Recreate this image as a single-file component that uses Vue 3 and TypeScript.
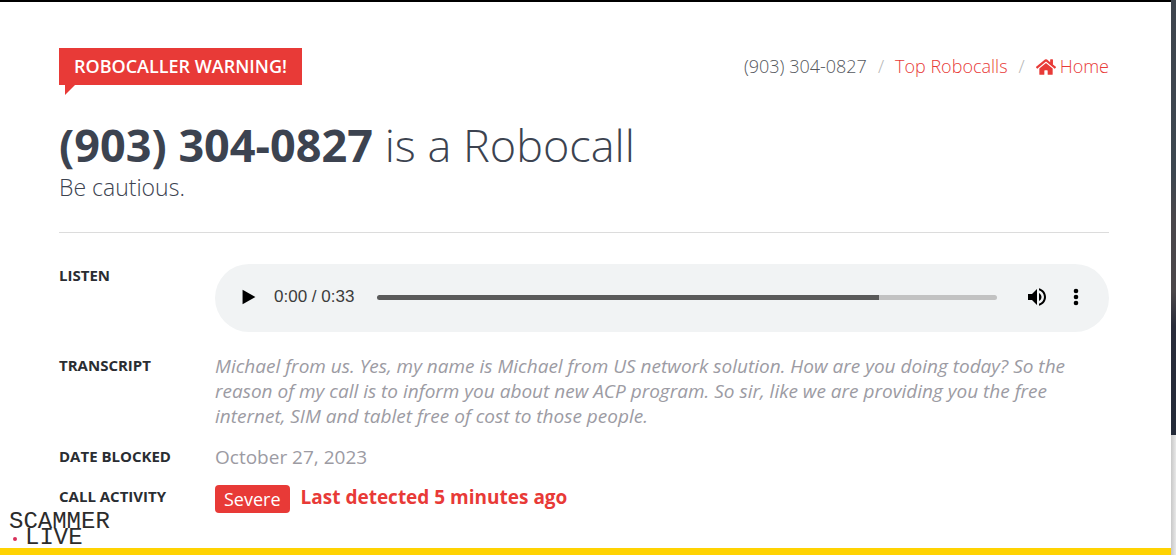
<script setup lang="ts">
import { computed, ref } from 'vue'

interface Recording {
  duration: number
  buffered: number
}

const phone = '(903) 304-0827'
const transcript =
  'Michael from us. Yes, my name is Michael from US network solution. How are you doing today? So the reason of my call is to inform you about new ACP program. So sir, like we are providing you the free internet, SIM and tablet free of cost to those people.'

const recording: Recording = { duration: 33, buffered: 0.81 }
const position = ref(0)

const clock = (seconds: number): string =>
  `${Math.floor(seconds / 60)}:${String(Math.floor(seconds % 60)).padStart(2, '0')}`

const elapsed = computed(() => `${clock(position.value)} / ${clock(recording.duration)}`)
const bufferedWidth = computed(() => ({ '--buffered': `${recording.buffered * 100}%` }))
</script>

<template>
  <div class="screen">
    <div class="page">
      <main class="content">
        <header class="top">
          <strong class="warning">ROBOCALLER WARNING!</strong>
          <nav class="crumbs" aria-label="Breadcrumb">
            <span class="current">{{ phone }}</span>
            <span class="slash">/</span>
            <a href="#robocalls">Top Robocalls</a>
            <span class="slash">/</span>
            <a href="#home" class="home">
              <svg viewBox="0 0 576 512" aria-hidden="true">
                <path d="M280.37 148.26L96 300.11V464a16 16 0 0 0 16 16l112.06-.29a16 16 0 0 0 15.92-16V368a16 16 0 0 1 16-16h64a16 16 0 0 1 16 16v95.64a16 16 0 0 0 16 16.05L464 480a16 16 0 0 0 16-16V300L295.67 148.26a12.19 12.19 0 0 0-15.3 0zM571.6 251.47L488 182.56V44.05a12 12 0 0 0-12-12h-56a12 12 0 0 0-12 12v72.61L318.47 43a48 48 0 0 0-61 0L4.34 251.47a12 12 0 0 0-1.6 16.9l25.5 31A12 12 0 0 0 45.15 301l235.22-193.74a12.19 12.19 0 0 1 15.3 0L530.9 301a12 12 0 0 0 16.9-1.6l25.5-31a12 12 0 0 0-1.7-16.93z" />
              </svg>
              Home
            </a>
          </nav>
        </header>

        <h1><strong>{{ phone }}</strong> is a Robocall</h1>
        <p class="lead">Be cautious.</p>

        <dl class="details">
          <dt>LISTEN</dt>
          <dd>
            <div class="player">
              <button type="button" class="play" aria-label="Play">
                <svg viewBox="0 0 24 24"><path d="M5 4v16l14-8z" /></svg>
              </button>
              <span class="time">{{ elapsed }}</span>
              <input
                v-model.number="position"
                class="seek"
                type="range"
                min="0"
                :max="recording.duration"
                aria-label="Seek"
                :style="bufferedWidth"
              />
              <button type="button" class="volume" aria-label="Mute">
                <svg viewBox="0 0 24 24">
                  <path d="M3 9v6h4l5 5V4L7 9H3zm13.5 3c0-1.77-1.02-3.29-2.5-4.03v8.05c1.48-.73 2.5-2.25 2.5-4.02zM14 3.23v2.06c2.89.86 5 3.54 5 6.71s-2.11 5.85-5 6.71v2.06c4.01-.91 7-4.49 7-8.77s-2.99-7.86-7-8.77z" />
                </svg>
              </button>
              <button type="button" class="more" aria-label="More options">
                <svg viewBox="0 0 24 24">
                  <circle cx="12" cy="6" r="2.3" />
                  <circle cx="12" cy="12" r="2.3" />
                  <circle cx="12" cy="18" r="2.3" />
                </svg>
              </button>
            </div>
          </dd>

          <dt>TRANSCRIPT</dt>
          <dd class="transcript"><em>{{ transcript }}</em></dd>

          <dt>DATE BLOCKED</dt>
          <dd>October 27, 2023</dd>

          <dt>CALL ACTIVITY</dt>
          <dd class="activity">
            <span class="badge">Severe</span>
            <strong>Last detected 5 minutes ago</strong>
          </dd>
        </dl>
      </main>
      <div class="stripe"></div>
    </div>
    <div class="edge"><div class="backdrop"></div></div>
    <div class="watermark">
      <span>SCAMMER</span>
      <span class="second"><i class="dot"></i>LIVE</span>
    </div>
  </div>
</template>

<style>
body {
  margin: 0;
  background: #fff;
}
</style>

<style scoped>
.screen {
  position: relative;
  display: flex;
  min-height: 100vh;
  font-family: "Open Sans", "Noto Sans", sans-serif;
  color: #3c4350;
}

.page {
  flex: 1;
  min-width: 0;
  display: flex;
  flex-direction: column;
  border-top: 2px solid #000;
}

.content {
  flex: 1;
  padding: 46px 62px 24px 59px;
}

.stripe {
  height: 7px;
  background: #ffd302;
}

.edge {
  width: 5px;
  background: linear-gradient(90deg, #c8c8c8, #e8e8e8);
}

.backdrop {
  height: 435px;
  background: linear-gradient(#3f454e 0%, #3d4750 40%, #4a474b 50%, #4b474a 67%, #292c3a 75%, #232a38 100%);
}

.top {
  display: flex;
  justify-content: space-between;
  align-items: center;
}

.warning {
  position: relative;
  padding: 0 15px;
  background: #e83a37;
  color: #fff;
  font-size: 18px;
  font-weight: 600;
  line-height: 37px;
}

.warning::after {
  content: "";
  position: absolute;
  top: 100%;
  left: 6px;
  border-top: 10px solid #e83a37;
  border-right: 10px solid transparent;
}

.crumbs {
  display: flex;
  gap: 11px;
  font-size: 18px;
  font-weight: 300;
  line-height: 27px;
}

.current {
  color: #55585e;
}

.slash {
  color: #b4b4b4;
}

a {
  color: #e83a37;
  text-decoration: none;
}

.home {
  display: flex;
  align-items: center;
  gap: 4px;
}

.home svg {
  width: 20px;
  height: 18px;
  fill: #e83a37;
}

h1 {
  margin: 32px 0 0;
  font-size: 45px;
  font-weight: 300;
  line-height: 56px;
}

h1 strong {
  font-weight: 700;
}

.lead {
  margin: 0 0 30px;
  font-size: 23px;
  font-weight: 300;
  line-height: 29px;
}

.details {
  display: grid;
  grid-template-columns: 140px 1fr;
  column-gap: 16px;
  row-gap: 16px;
  margin: 0;
  padding-top: 31px;
  border-top: 1px solid #dcdcdc;
}

dt {
  color: #2a2d32;
  font-size: 15px;
  font-weight: 700;
  line-height: 23px;
}

dd {
  margin: 0;
  color: #9c9ba3;
  font-size: 19px;
  line-height: 24px;
}

.transcript {
  line-height: 25px;
}

.player {
  display: flex;
  align-items: center;
  height: 68px;
  margin-bottom: 6px;
  padding: 0 20px 2px;
  box-sizing: border-box;
  border-radius: 34px;
  background: #f1f3f4;
}

button {
  display: flex;
  align-items: center;
  justify-content: center;
  width: 28px;
  height: 32px;
  padding: 0;
  border: 0;
  background: none;
}

button svg {
  width: 24px;
  height: 24px;
  fill: #000;
}

.play svg {
  width: 22px;
  height: 22px;
}

.time {
  margin-left: 11px;
  color: #3c3c3c;
  font-family: "Liberation Sans", Arial, sans-serif;
  font-size: 17px;
}

.seek {
  flex: 1;
  min-width: 0;
  height: 5px;
  margin: 0 26px 0 23px;
  appearance: none;
  border-radius: 3px;
  background: linear-gradient(90deg, #5a5a5a var(--buffered), #c2c2c2 var(--buffered));
}

.seek::-webkit-slider-thumb {
  appearance: none;
  width: 1px;
  height: 5px;
}

.more {
  margin-left: 12px;
  width: 26px;
}

.activity {
  display: flex;
  align-items: flex-start;
  gap: 11px;
  color: #e83a37;
}

.activity strong {
  line-height: 25px;
}

.badge {
  padding: 0 9px;
  border-radius: 4px;
  background: #e83a37;
  color: #fff;
  font-size: 18px;
  line-height: 28px;
}

.watermark {
  position: absolute;
  left: 9px;
  bottom: 9px;
  display: flex;
  flex-direction: column;
  color: #2c2c2c;
  font-family: "Liberation Mono", monospace;
  font-size: 24px;
  line-height: 16px;
}

.second {
  display: flex;
  align-items: center;
  gap: 8px;
}

.dot {
  width: 4px;
  height: 4px;
  margin: 2px 0 0 4px;
  border-radius: 50%;
  background: #d8315b;
}
</style>
